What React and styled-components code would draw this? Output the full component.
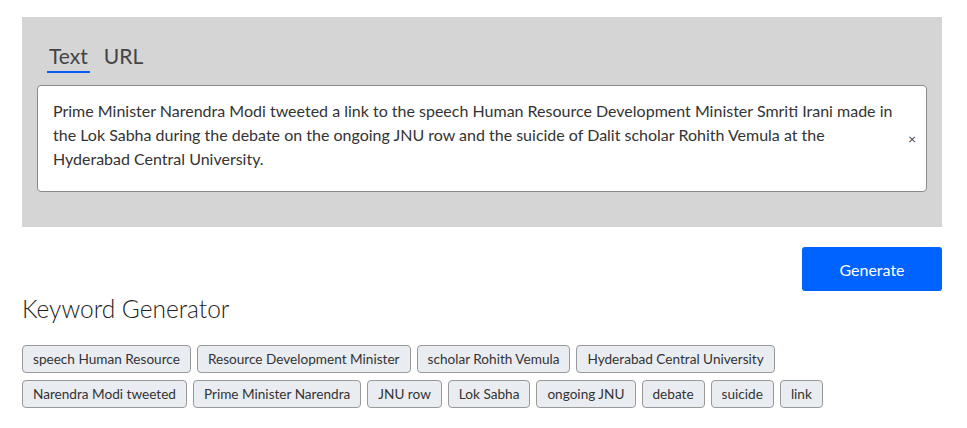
import styled, { createGlobalStyle } from "styled-components";

const Global = createGlobalStyle`
  body {
    margin: 0;
    background: #fff;
    font-family: Lato, "Noto Sans", sans-serif;
    color: #333;
  }
`;

const Page = styled.div`
  width: 920px;
  margin: 17px 0 0 22px;
`;

const Panel = styled.section`
  background: #d5d5d5;
  padding: 26px 15px 35px;
`;

const Tabs = styled.div`
  display: flex;
  gap: 12px;
  padding-left: 10px;
  margin-bottom: 12px;
`;

const Tab = styled.button`
  border: none;
  background: none;
  padding: 0 2px 3px;
  font-family: inherit;
  font-size: 21px;
  color: #444;
  border-bottom: 2px solid ${(p) => (p.$active ? "#0a5cf0" : "transparent")};
  cursor: pointer;
`;

const InputBox = styled.div`
  position: relative;
  background: #fff;
  border: 1px solid #8a8a8a;
  border-radius: 4px;
  padding: 13px 24px 20px 15px;
  font-size: 16px;
  line-height: 24px;
  color: #333;
`;

const Clear = styled.span`
  position: absolute;
  right: 10px;
  top: 50%;
  transform: translateY(-50%);
  font-size: 14px;
  color: #444;
`;

const Actions = styled.div`
  display: flex;
  justify-content: flex-end;
  margin-top: 20px;
`;

const Generate = styled.button`
  width: 140px;
  height: 44px;
  border: none;
  border-radius: 3px;
  background: #0062ff;
  color: #fff;
  font-family: inherit;
  font-size: 16px;
`;

const Title = styled.h2`
  margin: 3px 0 22px;
  font-size: 24.5px;
  font-weight: 300;
  color: #222;
`;

const Tags = styled.div`
  display: flex;
  flex-wrap: wrap;
  gap: 7px 6px;
`;

const Tag = styled.span`
  height: 28px;
  box-sizing: border-box;
  padding: 0 10px;
  display: flex;
  align-items: center;
  background: #e9edf2;
  border: 1px solid #999;
  border-radius: 4px;
  font-size: 13.6px;
  color: #333;
`;

const keywords = [
  "speech Human Resource",
  "Resource Development Minister",
  "scholar Rohith Vemula",
  "Hyderabad Central University",
  "Narendra Modi tweeted",
  "Prime Minister Narendra",
  "JNU row",
  "Lok Sabha",
  "ongoing JNU",
  "debate",
  "suicide",
  "link",
];

export default function App() {
  return (
    <Page>
      <Global />
      <Panel>
        <Tabs>
          <Tab $active>Text</Tab>
          <Tab>URL</Tab>
        </Tabs>
        <InputBox>
          Prime Minister Narendra Modi tweeted a link to the speech Human
          Resource Development Minister Smriti Irani made in the Lok Sabha
          during the debate on the ongoing JNU row and the suicide of Dalit
          scholar Rohith Vemula at the Hyderabad Central University.
          <Clear>×</Clear>
        </InputBox>
      </Panel>
      <Actions>
        <Generate>Generate</Generate>
      </Actions>
      <Title>Keyword Generator</Title>
      <Tags>
        {keywords.map((k) => (
          <Tag key={k}>{k}</Tag>
        ))}
      </Tags>
    </Page>
  );
}
